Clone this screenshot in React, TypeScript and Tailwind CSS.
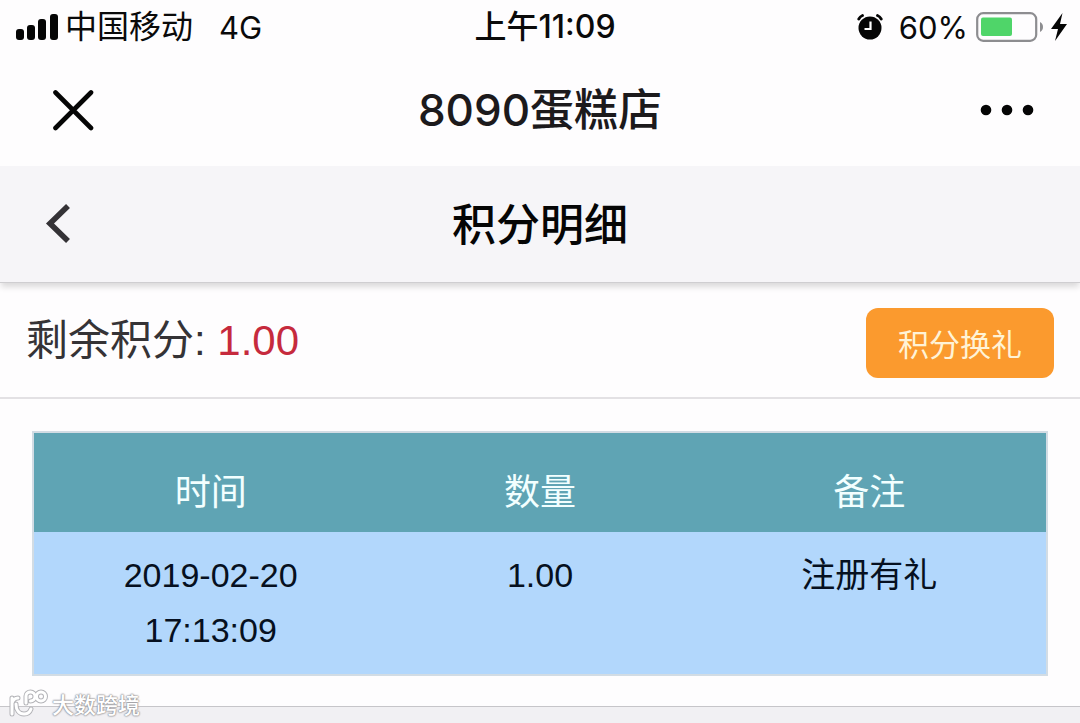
const records = [{ date: "2019-02-20", time: "17:13:09", amount: "1.00", note: "注册有礼" }];

function SignalIcon() {
  return (
    <svg width="43" height="27" viewBox="0 0 43 27" fill="#050505" aria-hidden="true">
      <rect x="0" y="15" width="8" height="11" rx="3" />
      <rect x="11" y="11" width="8" height="15" rx="3" />
      <rect x="22" y="5" width="8" height="21" rx="3" />
      <rect x="34" y="0" width="8" height="26" rx="3" />
    </svg>
  );
}

function AlarmIcon() {
  return (
    <svg width="26" height="26" viewBox="0 0 26 26" fill="none" aria-hidden="true">
      <circle cx="13" cy="14" r="11.5" fill="#050505" />
      <path d="M1.8 5C2.6 3.4 3.8 2.2 5.5 1.5M24.2 5C23.4 3.4 22.2 2.2 20.5 1.5" stroke="#050505" strokeWidth="2.8" strokeLinecap="round" />
      <path d="M13.5 7.5V15H7.5" stroke="#fff" strokeWidth="2.2" />
    </svg>
  );
}

function BatteryIcon() {
  return (
    <svg width="68" height="30" viewBox="0 0 68 30" fill="none" aria-hidden="true">
      <rect x="1.2" y="1.2" width="59" height="27.6" rx="6" stroke="#8d8d90" strokeWidth="2.2" />
      <rect x="5" y="5.5" width="31" height="18.5" rx="2" fill="#4fd569" />
      <path d="M64 10C66.3 11.2 67 13 67 15S66.3 18.8 64 20Z" fill="#8d8d90" />
    </svg>
  );
}

function BoltIcon() {
  return (
    <svg width="24" height="28" viewBox="0 0 24 28" fill="#050505" aria-hidden="true">
      <path d="M12.5 0L1 16H8L5 28L17 11H10Z" />
    </svg>
  );
}

const brandStrokes = "M4 9V25M4 14C5 11 7 9 10 9M8 15C8 21 11 25 16 25C20 25 22 23 23 20M18 14V7C18 4.5 20 3 22.5 3S27 5 27 7.5S25 12 22.5 12M33 3A4.5 4.5 0 1 1 33 12A4.5 4.5 0 1 1 33 3";

function BrandMark() {
  return (
    <svg width="42" height="30" viewBox="0 0 42 30" fill="none" strokeLinecap="round" strokeLinejoin="round" aria-hidden="true">
      <path d={brandStrokes} stroke="#b4b4b8" strokeWidth="5" />
      <path d={brandStrokes} stroke="#fff" strokeWidth="3" />
    </svg>
  );
}

function StatusBar() {
  return (
    <div className="grid h-[54px] grid-cols-[1fr_auto_1fr] items-center pr-1.5 pl-4 font-[Inter,'Noto_Sans_CJK_SC',sans-serif] text-[31px] leading-none text-[#0a0a0a]">
      <div className="flex items-center gap-1.5">
        <SignalIcon />
        <span className="text-[32px]">中国移动</span>
        <span className="ml-5">4G</span>
      </div>
      <time className="text-[32px] font-medium">上午11:09</time>
      <div className="flex items-center justify-end">
        <AlarmIcon />
        <span className="mr-2 ml-4">60%</span>
        <BatteryIcon />
        <span className="ml-1.5">
          <BoltIcon />
        </span>
      </div>
    </div>
  );
}

function NavBar() {
  return (
    <header className="grid h-28 grid-cols-[1fr_auto_1fr] items-center px-12 font-[Inter,'Noto_Sans_CJK_SC',sans-serif]">
      <button type="button" aria-label="关闭" className="justify-self-start p-1">
        <svg width="42" height="42" viewBox="0 0 42 42" fill="none" stroke="#050505" strokeWidth="4.6" strokeLinecap="round" aria-hidden="true">
          <path d="M3.5 3.5L39 39M39 3.5L3.5 39" />
        </svg>
      </button>
      <h1 className="text-[44px] leading-none font-medium text-[#1c1a1c]">8090蛋糕店</h1>
      <button type="button" aria-label="更多" className="justify-self-end">
        <svg width="52" height="12" viewBox="0 0 52 12" fill="#050505" className="overflow-visible" aria-hidden="true">
          <circle cx="6" cy="6" r="5.3" />
          <circle cx="27" cy="6" r="5.3" />
          <circle cx="48" cy="6" r="5.3" />
        </svg>
      </button>
    </header>
  );
}

function PageHeader() {
  return (
    <div className="grid h-[117px] grid-cols-[1fr_auto_1fr] items-center border-b border-[#cfced1] bg-[#f6f5f8] px-11 shadow-[0_5px_6px_-1px_rgba(0,0,0,0.14)]">
      <button type="button" aria-label="返回" className="justify-self-start">
        <svg width="26" height="40" viewBox="0 0 26 40" fill="none" stroke="#343236" strokeWidth="5.6" aria-hidden="true">
          <path d="M24 2L6 19.5L24 37" />
        </svg>
      </button>
      <h2 className="pt-1 text-[44px] leading-none font-medium text-[#050505]">积分明细</h2>
    </div>
  );
}

export default function App() {
  return (
    <div className="relative flex min-h-screen flex-col bg-[#fefdfe] font-['Liberation_Sans','Noto_Sans_CJK_SC',sans-serif]">
      <StatusBar />
      <NavBar />
      <PageHeader />
      <section className="flex h-[116px] items-center justify-between border-b-2 border-[#e3e1e4] px-[26px] pt-1.5">
        <p className="pb-1 text-[42px] leading-none text-[#353336]">
          剩余积分: <span className="text-[#c62a3d]">1.00</span>
        </p>
        <button type="button" className="h-[70px] rounded-xl bg-[#fb9a2e] px-8 pt-1 text-[31px] leading-none text-[#fff3d6]">
          积分换礼
        </button>
      </section>
      <main className="px-8 pt-8 pb-[30px]">
        <table className="w-full table-fixed border-separate border-spacing-0 border-2 border-[#d2dce4] text-center">
          <thead>
            <tr className="h-[99px] bg-[#5fa4b4] text-[36px] leading-none text-[#f2ffff]">
              <th scope="col" className="pt-5 pl-4 font-normal">时间</th>
              <th scope="col" className="pt-5 font-normal">数量</th>
              <th scope="col" className="pt-5 pr-4 font-normal">备注</th>
            </tr>
          </thead>
          <tbody>
            {records.map((r) => (
              <tr key={r.date + r.time} className="bg-[#b2d7fc] align-top text-[34px] leading-[55px] text-[#061020]">
                <td className="py-4 pr-16 pl-20">
                  {r.date} {r.time}
                </td>
                <td className="py-4">{r.amount}</td>
                <td className="py-4 pr-4">{r.note}</td>
              </tr>
            ))}
          </tbody>
        </table>
      </main>
      <footer className="flex-1 border-t border-[#c6c5c9] bg-[#f1f0f3]" />
      <div className="absolute bottom-1 left-2 flex items-end gap-0.5">
        <BrandMark />
        <span className="text-[22px] leading-[26px] font-medium text-white [text-shadow:0_0_2px_#8f8f94,0_0_2px_#8f8f94,0_0_1px_#8f8f94]">大数跨境</span>
      </div>
    </div>
  );
}
